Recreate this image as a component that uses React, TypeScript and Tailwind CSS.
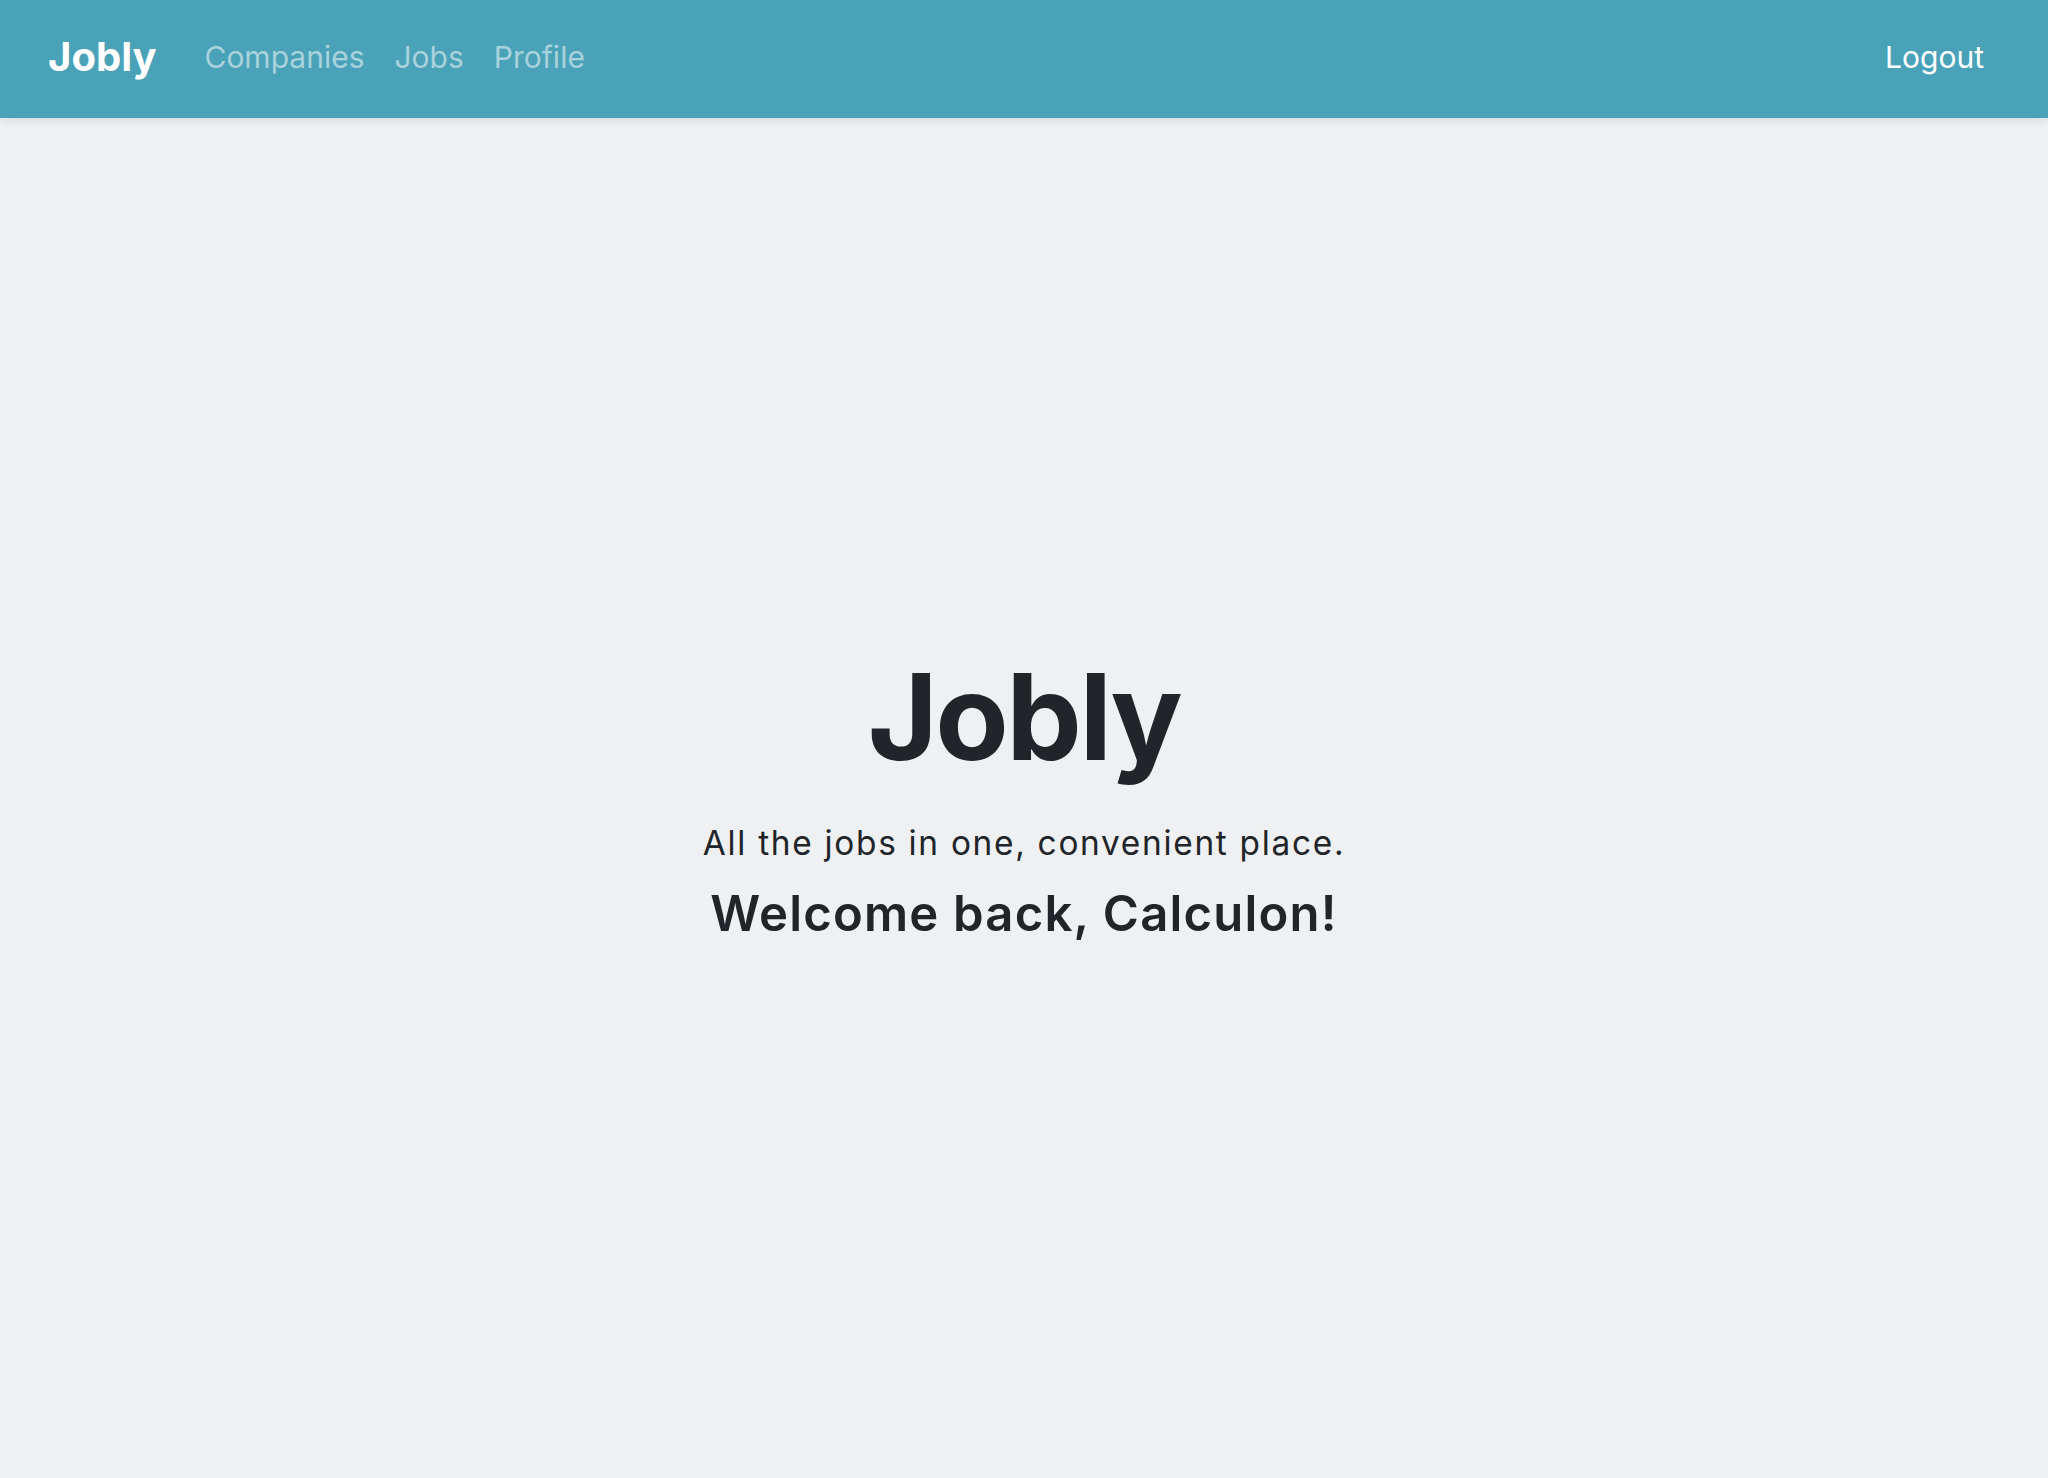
export default function App() {
  const font = { fontFamily: 'Inter, Lato, "Noto Sans", sans-serif' };
  return (
    <div className="min-h-screen bg-[#eff0f2] flex flex-col" style={font}>
      <nav className="h-[118px] bg-[#4aa2b8] flex items-center px-[48px] pb-[5px] shadow-[0_2px_10px_rgba(0,0,0,0.1)] relative z-10">
        <a className="text-white font-bold text-[40px] leading-none mr-[48px]">Jobly</a>
        <div className="flex items-center gap-[30px] text-[30px] leading-none text-[#a8d2dd]">
          <a>Companies</a>
          <a>Jobs</a>
          <a>Profile</a>
        </div>
        <div className="ml-auto text-white text-[30px] leading-none pr-[16px]">Logout</div>
      </nav>
      <main className="flex-1 flex flex-col items-center text-[#212529] pt-[539px]">
        <h1 className="font-bold text-[120px] leading-none tracking-[-2.6px]">Jobly</h1>
        <p className="text-[33.4px] leading-none mt-[50px] tracking-[1.7px]">All the jobs in one, convenient place.</p>
        <h2 className="font-semibold text-[49px] leading-none mt-[29px] tracking-[1.2px]">Welcome back, Calculon!</h2>
      </main>
    </div>
  );
}
